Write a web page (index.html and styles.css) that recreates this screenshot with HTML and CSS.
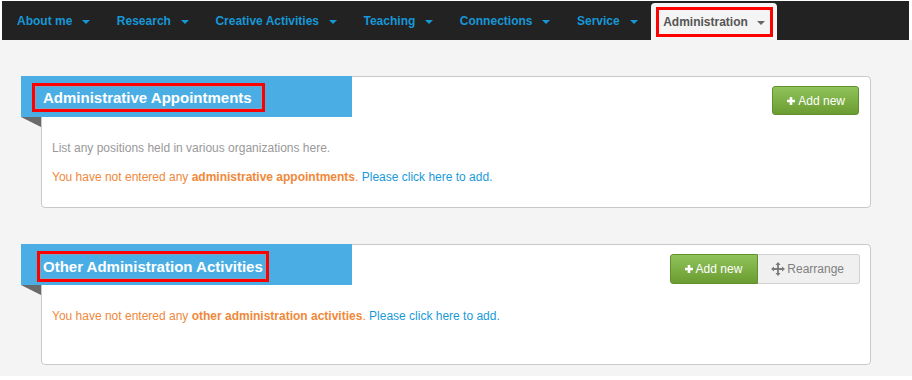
FILE: index.html
```html
<!DOCTYPE html>
<html lang="en">
<head>
<meta charset="utf-8">
<title>Administration</title>
<link rel="stylesheet" href="styles.css">
</head>
<body>
<nav class="topnav">
  <ul class="menu">
    <li class="menu-item"><a class="menu-link" href="#">About me<span class="caret"></span></a></li>
    <li class="menu-item"><a class="menu-link" href="#">Research<span class="caret"></span></a></li>
    <li class="menu-item"><a class="menu-link" href="#">Creative Activities<span class="caret"></span></a></li>
    <li class="menu-item"><a class="menu-link" href="#">Teaching<span class="caret"></span></a></li>
    <li class="menu-item"><a class="menu-link" href="#">Connections<span class="caret"></span></a></li>
    <li class="menu-item"><a class="menu-link" href="#">Service<span class="caret"></span></a></li>
    <li class="menu-item menu-item--active"><a class="menu-link menu-link--active" href="#">Administration<span class="caret"></span></a></li>
  </ul>
</nav>
<main class="content">
  <section class="panel">
    <div class="panel-head">
      <div class="ribbon">
        <h2 class="ribbon-title"><span class="ribbon-text">Administrative Appointments</span></h2>
      </div>
      <div class="actions">
        <button class="btn btn-green" type="button"><svg class="icon-plus" width="8" height="8" viewBox="0 0 8 8"><path d="M2.7 0h2.6v2.7H8v2.6H5.3V8H2.7V5.3H0V2.7h2.7z" fill="#fff"/></svg>Add new</button>
      </div>
    </div>
    <div class="panel-body">
      <p class="hint">List any positions held in various organizations here.</p>
      <p class="empty">You have not entered any <strong>administrative appointments</strong>. <a class="add-link" href="#">Please click here to add.</a></p>
    </div>
  </section>
  <section class="panel">
    <div class="panel-head">
      <div class="ribbon ribbon--alt">
        <h2 class="ribbon-title"><span class="ribbon-text ribbon-text--alt">Other Administration Activities</span></h2>
      </div>
      <div class="actions btn-group">
        <button class="btn btn-green btn-first" type="button"><svg class="icon-plus" width="8" height="8" viewBox="0 0 8 8"><path d="M2.7 0h2.6v2.7H8v2.6H5.3V8H2.7V5.3H0V2.7h2.7z" fill="#fff"/></svg>Add new</button>
        <button class="btn btn-gray btn-last" type="button"><svg class="icon-move" width="14" height="14" viewBox="0 0 14 14"><path d="M7 0l2.6 3H7.9v3.1H11V4.4L14 7l-3 2.6V7.9H7.9V11h1.7L7 14l-2.6-3h1.7V7.9H3v1.7L0 7l3-2.6v1.7h3.1V3H4.4z" fill="#7a7a7a"/></svg>Rearrange</button>
      </div>
    </div>
    <div class="panel-body panel-body--tall">
      <p class="empty">You have not entered any <strong>other administration activities</strong>. <a class="add-link" href="#">Please click here to add.</a></p>
    </div>
  </section>
</main>
</body>
</html>
```
FILE: styles.css
```css
html, body {
  margin: 0;
  padding: 0;
  background: #ffffff;
  font-family: "Liberation Sans", Arial, sans-serif;
}

.topnav {
  margin: 1px 3px 0 2px;
  height: 39px;
  background: #222222;
}

.menu {
  display: flex;
  height: 100%;
  margin: 0;
  padding: 0 0 0 2px;
  list-style: none;
}

.menu-item {
  display: flex;
}

.menu-link {
  display: flex;
  align-items: center;
  padding: 1px 13.5px 0 13px;
  color: #1797d6;
  font-size: 12px;
  font-weight: bold;
  text-decoration: none;
}

.caret {
  display: inline-block;
  width: 0;
  height: 0;
  margin-left: 10px;
  margin-top: 2px;
  border-top: 4px solid currentColor;
  border-left: 4px solid transparent;
  border-right: 4px solid transparent;
}

.menu-item--active {
  margin-top: 2px;
  padding: 4px 4px 3px 5px;
  background: #f4f4f4;
  border-radius: 4px 4px 0 0;
}

.menu-link--active {
  padding: 0 5px 0 4px;
  border: 3px solid #ff0000;
  color: #555555;
}

.menu-link--active .caret {
  margin-left: 9px;
  color: #666666;
}

.content {
  background: #f4f4f4;
  padding: 36px 41px 11px 41px;
}

.panel {
  background: #ffffff;
  border: 1px solid #c9c9c9;
  border-radius: 4px;
}

.panel + .panel {
  margin-top: 36px;
}

.panel-head {
  display: flex;
  justify-content: space-between;
  align-items: flex-start;
}

.ribbon {
  position: relative;
  box-sizing: border-box;
  width: 331px;
  height: 41px;
  margin: -1px 0 0 -21px;
  padding: 7px 0 0 11px;
  background: #4aaee4;
}

.ribbon::after {
  content: "";
  position: absolute;
  left: 0;
  top: 100%;
  width: 0;
  height: 0;
  border-top: 10px solid #6a6a6a;
  border-left: 20px solid transparent;
}

.ribbon--alt {
  padding-left: 16px;
}

.ribbon-title {
  display: inline-block;
  margin: 0;
  border: 3px solid #ff0000;
  color: #ffffff;
  font-size: 15px;
  font-weight: bold;
  line-height: 21px;
}

.ribbon-text {
  display: block;
  border: 1px solid #7fa3c0;
  padding: 0 9px 0 7px;
}

.ribbon-text--alt {
  padding: 1px 2px 1px 2px;
}

.actions {
  display: flex;
  margin: 9px 11px 0 0;
}

.btn {
  display: inline-flex;
  align-items: center;
  box-sizing: border-box;
  height: 29px;
  margin: 0;
  padding: 0 13px 0 14px;
  font-family: "Liberation Sans", Arial, sans-serif;
  font-size: 12px;
  border-radius: 3px;
  cursor: pointer;
}

.btn-green {
  color: #ffffff;
  background: linear-gradient(#8fc35b, #6b9c31);
  border: 1px solid #638f2c;
}

.btn-gray {
  color: #808080;
  background: #f0f0f0;
  border: 1px solid #d2d2d2;
}

.btn-group {
  margin-right: 10px;
}

.btn-group .btn {
  height: 30px;
}

.btn-first {
  border-radius: 3px 0 0 3px;
  padding: 0 15px 0 14px;
}

.btn-last {
  border-left: none;
  border-radius: 0 3px 3px 0;
  padding: 0 15px 0 13px;
}

.icon-plus {
  margin-right: 3px;
}

.icon-move {
  margin-right: 2px;
}

.panel-body {
  padding: 22px 10px 10px;
}

.panel-body--tall {
  padding-bottom: 28px;
}

.panel-body p {
  margin: 0 0 11px;
  font-size: 12px;
  line-height: 18px;
}

.hint {
  color: #999999;
}

.empty {
  color: #f0883a;
}

.empty strong {
  font-weight: bold;
}

.add-link {
  color: #1a9ad9;
  text-decoration: none;
}
```
